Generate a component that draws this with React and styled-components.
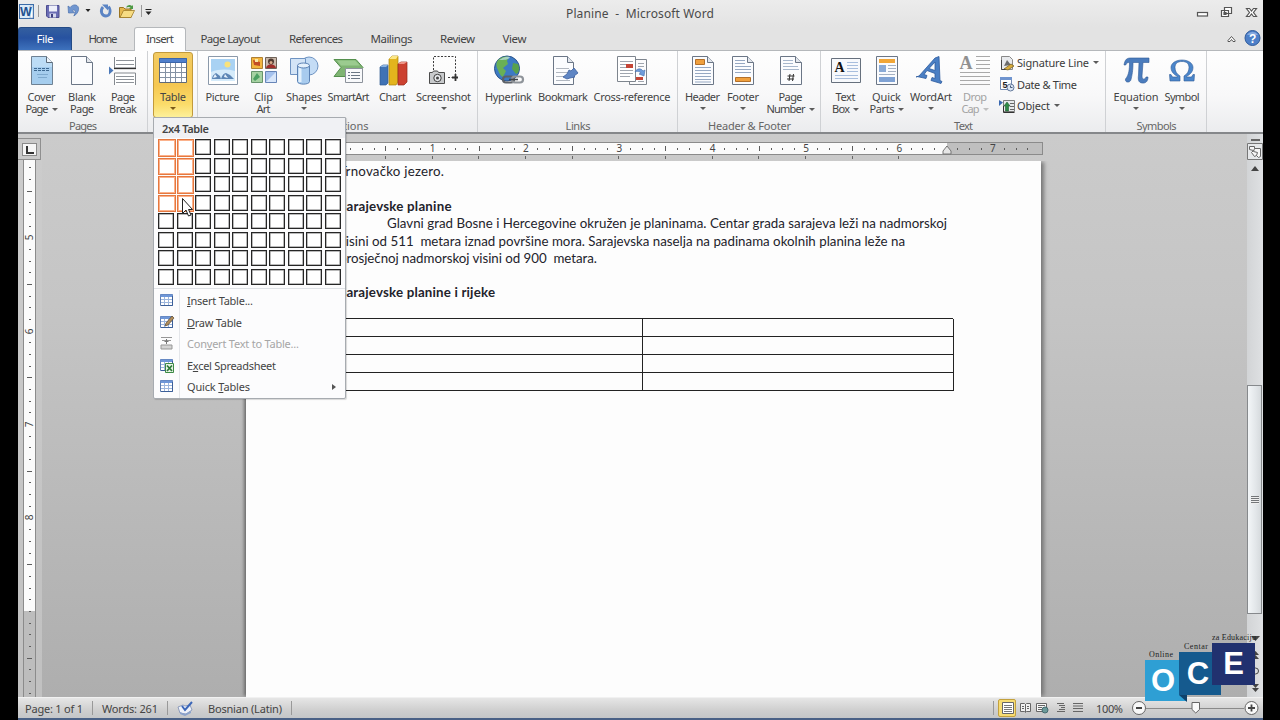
import React, { useLayoutEffect, useRef, useState } from 'react'
import styled, { createGlobalStyle, css } from 'styled-components'

const GlobalStyle = createGlobalStyle`
  * { box-sizing: border-box; }
  body {
    margin: 0;
    background: #000;
    overflow: hidden;
    font-family: "Noto Sans", "Open Sans", sans-serif;
    font-size: 11px;
    color: #3b3b3b;
  }
  svg { display: block; flex: none; }
`

const Screen = styled.div`
  width: 1280px;
  height: 720px;
  padding: 0 17px 0 18px;
  background: #000;
`
const Window = styled.div`
  position: relative;
  width: 1245px;
  height: 720px;
  display: flex;
  flex-direction: column;
  background: #e4e4e4;
`

/* ---------- text ---------- */
const FitBox = styled.span`
  display: inline-block;
  white-space: pre;
  text-align: left;
  flex: none;
`
// tracks the text so that it spans exactly `w` pixels
const Fit = ({ w, children }) => {
  const ref = useRef(null)
  const [spacing, setSpacing] = useState(0)
  useLayoutEffect(() => {
    const chars = ref.current.textContent.length
    const natural = ref.current.getBoundingClientRect().width
    setSpacing((w - natural) / Math.max(1, chars - 1))
  }, [w])
  return (
    <FitBox style={{ width: w }}>
      <span ref={ref} style={{ letterSpacing: spacing }}>{children}</span>
    </FitBox>
  )
}

const Caret = styled.i`
  display: inline-block;
  flex: none;
  border: 3px solid transparent;
  border-top-color: ${p => p.color || '#5b5b5b'};
  border-bottom: 0;
  margin: ${p => p.m || '0'};
`

/* ---------- title bar ---------- */
const TitleBar = styled.div`
  height: 27px;
  display: flex;
  align-items: flex-start;
  background: linear-gradient(#ececec, #e3e3e3);
`
const QuickAccess = styled.div`
  width: 548px;
  padding: 3px 0 0 1px;
`
const Title = styled.div`
  font-size: 12px;
  line-height: 28px;
  color: #4a4a4a;
`
const WindowButtons = styled.div`
  margin-left: auto;
  padding: 6px 5px 0 0;
`

const QuickIcons = () => (
  <svg width="138" height="18" viewBox="19 3 138 18">
    <rect x="19.500" y="4.500" width="14" height="14" fill="#dcebf8" stroke="#3b6ca8" />
    <path d="M30 6h3v12h-3z" fill="#fff" stroke="#7d9cc4" strokeWidth=".6" />
    <text x="20" y="16" fontFamily="Liberation Sans" fontWeight="bold" fontSize="12.500" fill="#1f5290">W</text>
    <path d="M38.500 5v12M141.500 5v12" stroke="#9a9a9a" />
    <path d="M46.500 5.500h12.500v12H48l-1.500-1.500z" fill="#6a6cb4" stroke="#4d4e90" />
    <path d="M49 5.500h8v6h-8z" fill="#eef0fa" />
    <path d="M49.500 13.500h6.500v4h-6.500z" fill="#d6d9ee" />
    <path d="M51 14h2v3.500h-2z" fill="#3d3e80" />
    <path d="M68 6l.5 7 6-.2-2.200-2.200c3-1.600 4 .8 1.500 5.400 5.500-3 6.500-10 1.800-11-2-.4-4 .6-5.500 2.500z" fill="#7096d0" stroke="#4a70ae" strokeWidth=".7" />
    <path d="M85.500 9h5l-2.500 3z" fill="#222" />
    <path d="M103 7c-3.500 4-1 9 3 9s5.500-5.500 2.500-9.500" fill="none" stroke="#5b84c4" strokeWidth="2.800" />
    <path d="M102 4.500h6v6z" fill="#5b84c4" />
    <path d="M119.500 17.500v-10h4l1.500 1.500h6v8.500z" fill="#e6b84e" stroke="#9a7422" />
    <path d="M120 17.500l3.500-7h11l-3.500 7z" fill="#f7dc83" stroke="#a07c2a" strokeWidth=".8" />
    <path d="M126 7.500c2-3 4-3 6-1.500l1-1v4h-4l1.500-1.500c-1-1-3-.5-4.500 0z" fill="#4e9a46" />
    <path d="M145.500 9.500h6" stroke="#222" />
    <path d="M145.500 11.500h6l-3 3.500z" fill="#222" />
  </svg>
)

/* ---------- tabs ---------- */
const Tabs = styled.div`
  height: 24px;
  display: flex;
  background: #e3e3e3;
  border-bottom: 1px solid #b5b8bb;
`
const Tab = styled.div`
  width: ${p => p.width}px;
  height: 23px;
  display: flex;
  justify-content: center;
  line-height: 23px;
  color: #444;
  font-size: 11.500px;
  ${p => p.file && css`
    color: #fff;
    line-height: 22px;
    background: linear-gradient(#345f9f, #2752a0 45%, #3e72bd);
    border: 1px solid #244b86;
    border-bottom: 0;
    border-radius: 3px 3px 0 0;
  `}
  ${p => p.active && css`
    height: 24px;
    line-height: 22px;
    background: #fdfdfd;
    border: 1px solid #b5b8bb;
    border-bottom: 0;
    border-radius: 3px 3px 0 0;
  `}
`
const TabTools = styled.div`
  margin-left: auto;
  padding: 2px 2px 0 0;
`

/* ---------- ribbon ---------- */
const Ribbon = styled.div`
  height: 83px;
  flex: none;
  display: flex;
  background: linear-gradient(#fefefe, #f8f8f9 55%, #ebecee);
  border-bottom: 2px solid #85878a;
`
const Group = styled.div`
  width: ${p => p.width}px;
  padding: 1px 0 0 ${p => p.pad}px;
  display: flex;
  flex-direction: column;
  border-right: 1px solid #cfd1d4;
`
const GroupRow = styled.div`
  display: flex;
  height: 66px;
`
const GroupLabel = styled.div`
  display: flex;
  justify-content: center;
  line-height: 15px;
  color: #666;
  margin-left: -${p => p.pad}px;
  padding-left: 1px;
`
const BigButton = styled.div`
  width: ${p => p.width}px;
  height: 66px;
  flex: none;
  display: flex;
  flex-direction: column;
  align-items: center;
  padding-top: 2px;
  color: ${p => (p.disabled ? '#a3a3a3' : '#444')};
  ${p => p.active && css`
    padding-top: 1px;
    border: 1px solid #c29a3c;
    border-radius: 3px;
    background: linear-gradient(#f3cb62, #f5c751 50%, #fbdc6a 80%, #fdf09a);
  `}
`
const LabelLine = styled.div`
  height: 12px;
  line-height: 12px;
  display: flex;
  align-items: center;
  margin-top: ${p => (p.first ? 5 : 0)}px;
`
const SmallColumn = styled.div`
  display: flex;
  flex-direction: column;
  padding: 0 0 0 4px;
`
const SmallButton = styled.div`
  height: 21.500px;
  display: flex;
  align-items: center;
  gap: 2px;
`

const Doc = ({ children, x = 5.5, w = 21 }) => (
  <>
    <path d={`M${x} 2.500h${w - 6}l6 6v22h-${w}z`} fill="#fbfcfe" stroke="#6b7686" />
    <path d={`M${x + w - 6} 2.500v6h6`} fill="#e2e6ec" stroke="#6b7686" />
    {children}
  </>
)

const icons = {
  cover: (
    <>
      <path d="M5.500 2.500h15l6 6v22h-21z" fill="#a5cdee" stroke="#6e8193" />
      <path d="M6 3h14v6h6v4H6z" fill="#bcdcf5" />
      <path d="M20.500 2.500v6h6" fill="#eef5fb" stroke="#5c6a78" />
      <path d="M8 14.500h16M8 16.500h15" stroke="#3d6890" strokeDasharray="3 1" />
      <path d="M11 20.500h11M12 23.500h9" stroke="#7faacf" />
    </>
  ),
  blank: <Doc />,
  pageBreak: (
    <>
      <path d="M7.500 3v11h21V3M7.500 31V19h21v12" fill="#fff" stroke="#84898f" />
      <path d="M9 6.500h18M9 10.500h18M9 22.500h18M9 25.500h18M9 28.500h18" stroke="#8e9399" />
      <path d="M7 14.500h22" stroke="#333" strokeWidth="1.300" />
      <path d="M2 12.500l4.500 4-4.500 4z" fill="#4b78b8" />
    </>
  ),
  table: (
    <>
      <path d="M2.500 4.500h27v24h-27z" fill="#fff" stroke="#5f6a78" />
      <path d="M2.500 4.500h27v4h-27z" fill="#4f7fcb" stroke="#3c66aa" />
      <path d="M3 13.500h26M3 18.500h26M3 23.500h26M8.500 9v19M13.500 9v19M18.500 9v19M24.500 9v19" stroke="#8492a4" />
    </>
  ),
  picture: (
    <>
      <path d="M1.500 2.500h29v28h-29z" fill="#fff" stroke="#8b99aa" />
      <path d="M4 5h24v22H4z" fill="#a9d2f3" />
      <path d="M4 18c8-3 16-3 24-1v10H4z" fill="#d5ebfa" />
      <circle cx="20.500" cy="10.500" r="3" fill="#f9e27b" />
      <path d="M5 25c0-3 2-5 4-6l4 3 1 3zM14 25c1-4 3-6 5-6l4 2 4 4z" fill="#5d86b5" />
      <path d="M8 20l2 3-4 1zM18 20l3 4-4-1z" fill="#e8f2fb" />
    </>
  ),
  clipArt: (
    <>
      <path d="M3.500 3.500h11v11h-11z" fill="#f3b53f" stroke="#ae8033" />
      <path d="M5 6l7 2v4l-6-1z" fill="#c24c26" />
      <path d="M7 5h3v3H7z" fill="#fae7a6" />
      <path d="M17.500 3.500h11v11h-11z" fill="#c9b8ab" stroke="#6f6258" />
      <path d="M18 14c1-5 9-5 10 0z" fill="#a02e2a" />
      <circle cx="23" cy="7.500" r="3" fill="#4f3a30" />
      <circle cx="23" cy="8.500" r="1.500" fill="#d9ab8c" />
      <path d="M3.500 17.500h11v11h-11z" fill="#a6d2a2" stroke="#66936b" />
      <path d="M5 25l4-6 3 4-5 4z" fill="#4ca062" />
      <path d="M17.500 17.500h11v11h-11z" fill="#a5c2ee" stroke="#6785b7" />
      <path d="M28 18v10H18z" fill="#d8e6fa" />
    </>
  ),
  shapes: (
    <>
      <circle cx="21" cy="12" r="9" fill="#c4dcf5" stroke="#6e93c2" />
      <path d="M2.500 4.500h15v16h-15z" fill="#d3e4f6" stroke="#6e93c2" />
      <path d="M9.500 11.500v16c0 3.500 12 3.500 12 0v-16z" fill="#a8cbee" stroke="#5b82b4" />
      <path d="M12 13v15" stroke="#e3f0fc" strokeWidth="3" />
      <ellipse cx="15.500" cy="11.500" rx="6" ry="2.500" fill="#e4f0fb" stroke="#5b82b4" />
    </>
  ),
  smartArt: (
    <>
      <path d="M1 5.500h22l7 8-7 9H1l7-9z" fill="#7fb473" stroke="#55904e" />
      <path d="M4 6.500h18l5 5H8z" fill="#9bcb8f" />
      <path d="M12.500 14.500h17v14h-17z" fill="#f8f9fb" stroke="#8c929b" />
      <path d="M15 18.500h2M15 21.500h2M15 24.500h2M18 18.500h9M18 21.500h9M18 24.500h9" stroke="#6b7785" />
    </>
  ),
  chart: (
    <>
      <path d="M3 13l3-2h5v18l-2 2H3z" fill="#3f72b5" stroke="#2f598f" strokeWidth=".7" />
      <path d="M3 13l3-2h5l-2 2z" fill="#87b1e2" />
      <path d="M12 5l3-3h6v26l-2 3h-7z" fill="#e3b41d" stroke="#a8830f" strokeWidth=".7" />
      <path d="M12 5l3-3h6l-2 3z" fill="#fbe685" />
      <path d="M21 10l3-2h6v20l-3 3h-6z" fill="#cc4130" stroke="#93281a" strokeWidth=".7" />
      <path d="M21 10l3-2h6l-3 2z" fill="#ee9486" />
    </>
  ),
  screenshot: (
    <>
      <path d="M5.500 16V2.500h22V22M20 23.500h5" fill="none" stroke="#3c3c3c" strokeDasharray="2 1.500" />
      <path d="M27.500 20v7M24 23.500h6" stroke="#333" strokeWidth="1.800" />
      <path d="M1.500 18.500h3l1-1.500h4l1 1.500h6v11h-15z" fill="#c8cacc" stroke="#4b4b4b" />
      <circle cx="9.500" cy="24" r="3.700" fill="#e9ebee" stroke="#3c3c3c" />
      <circle cx="9.500" cy="24" r="1.500" fill="#444" />
    </>
  ),
  hyperlink: (
    <>
      <circle cx="14" cy="14.500" r="12.500" fill="#3d7ac4" stroke="#2a5288" />
      <path d="M5 6c4-4 9-4 11-3l-2 4 1 3-5 4 3 3-3 6c-4-2-4-6-6-9-1-3-1-5 1-8z" fill="#69b055" />
      <path d="M20 9l5 1c2 5 1 9-2 10l-4-5z" fill="#58a14d" />
      <path d="M6 6c4-3 8-4 11-3-1 3-7 3-11 3z" fill="#c5e3ef" opacity=".7" />
      <rect x="10" y="22.500" width="11" height="6" rx="3" fill="none" stroke="#5d6167" strokeWidth="2.200" />
      <rect x="19" y="22.500" width="11" height="6" rx="3" fill="none" stroke="#8f949a" strokeWidth="2.200" />
      <path d="M16 25.500h9" stroke="#42464b" strokeWidth="1.500" />
    </>
  ),
  bookmark: (
    <Doc x={6.5} w={20}>
      <path d="M9 14.500h13M9 18.500h12M9 22.500h10M9 26.500h14" stroke="#b1b7c0" />
      <path d="M16 23l4-3 2-4 2 1 3-3 4 5-4 3 1 1-5 1-3 1z" fill="#5f86c4" stroke="#3c609e" strokeWidth=".8" />
    </Doc>
  ),
  crossRef: (
    <>
      <path d="M13.500 5.500h17v25h-17z" fill="#fcfcfd" stroke="#7e858e" />
      <path d="M1.500 2.500h18v25h-18z" fill="#fff" stroke="#7e858e" />
      <path d="M4 7.500h13M4 10.500h6M4 13.500h6M4 16.500h13M4 19.500h13M4 22.500h10M22 9.500h6M22 12.500h6M22 27.500h6" stroke="#a0a6af" />
      <path d="M10 10h7v4h-7zM20 23h7v3h-7z" fill="#c44536" />
      <path d="M19 18c2-4 6-4 8-1l2-1-1 6-5-2 2-1c-2-2-4-2-6-1z" fill="#6e9bda" stroke="#426fae" strokeWidth=".6" />
    </>
  ),
  header: (
    <Doc>
      <path d="M8.500 5.500h9v5h-9z" fill="#ef9f3d" stroke="#b3702a" />
      <path d="M8 13.500h16M8 16.500h16M8 19.500h16M8 22.500h16M8 25.500h16M8 28h16" stroke="#96a8c2" />
    </Doc>
  ),
  footer: (
    <Doc>
      <path d="M8 6.500h10M8 9.500h10M8 12.500h16M8 15.500h16M8 18.500h16" stroke="#96a8c2" />
      <path d="M8.500 23.500h15v4h-15z" fill="#ef9f3d" stroke="#b3702a" />
    </Doc>
  ),
  pageNumber: (
    <Doc>
      <path d="M8 6.500h10M8 9.500h10M8 12.500h15M8 15.500h16" stroke="#a8b8cd" />
      <path d="M15 20l-1 7M18.500 20l-1 7M12.500 22h7M12 25h7" stroke="#333" />
    </Doc>
  ),
  textBox: (
    <>
      <path d="M1.500 4.500h29v24h-29z" fill="#f7f9fc" stroke="#66707d" />
      <text x="4.500" y="18" fontFamily="Liberation Serif" fontWeight="bold" fontSize="14" fill="#111">A</text>
      <path d="M17 8.500h11M17 11.500h11M17 14.500h11M17 17.500h11M5 21.500h23M5 24.500h23" stroke="#a8bedd" />
    </>
  ),
  quickParts: (
    <>
      <path d="M5.500 2.500h21v28h-21z" fill="#fafbfd" stroke="#6b7686" />
      <path d="M8 5h16v4H8z" fill="#f1a637" />
      <path d="M8 11h7v7H8z" fill="#8aaad6" />
      <path d="M17 11.500h8M17 14.500h8M17 17.500h8M8 20.500h16" stroke="#a5b1c3" />
      <path d="M8 23h16v5H8z" fill="#7fa2d4" />
    </>
  ),
  wordArt: (
    <path
      fillRule="evenodd"
      d="M1 23l3-1L20 4l4-1.500 1 24 2 1-1 2-10-3 1-3 3 1v-5l-8-3-3 4 3 1-1 3-9-2zM14 14.500l6 2V8z"
      fill="#4a7fc4"
      stroke="#2f5c9e"
      strokeWidth=".8"
    />
  ),
  dropCap: (
    <>
      <text x=".5" y="15" fontFamily="Liberation Serif" fontWeight="bold" fontSize="18" fill="#909090">A</text>
      <path d="M17 2.500h14M17 6.500h14M17 10.500h14M17 14.500h14M1 18.500h30M1 22.500h30M1 26.500h30M1 30.500h30" stroke="#a9a9a9" />
    </>
  ),
  equation: (
    <path
      d="M4 11c1-6 3-7 7-7h18v4.500h-6L22 22c0 4 3 4 4 1h2c0 5-3 6.500-6 6-4-.5-4-4-3.500-8L19 8.500h-6c0 8-1 13-2 17-1 4-6.500 3-5.500-.5C9 21 9.500 15 9.500 8.500c-2 0-3 .5-3.800 2.500z"
      fill="#4b7cbd"
      stroke="#2f5a97"
      strokeWidth=".6"
    />
  ),
  symbol: (
    <path
      d="M3.500 20.500H5l1.500 2.500h5v-.5C7 20 5 17 5 13.500 5 9 10 6 16 6s11 3 11 7.500c0 3.500-2 6.500-6.500 9v.5h5l1.500-2.500h1.500L28 27H18v-5c3.500-2 5-5 5-8.500 0-4-2.500-6-7-6s-7 2-7 6c0 3.500 1.500 6.500 5 8.500v5H4z"
      fill="#4b86cb"
      stroke="#2f5a97"
      strokeWidth=".6"
    />
  ),
}

const Icon = ({ name }) => (
  <svg width="32" height="32" viewBox="0 0 32 32">{icons[name]}</svg>
)

// lines: [text, width], the caret goes after the last line or below a single one
const groups = [
  {
    label: ['Pages', 28], width: 130, pad: 3,
    buttons: [
      { icon: 'cover', width: 41, lines: [['Cover', 28], ['Page', 23]], caret: true },
      { icon: 'blank', width: 40, lines: [['Blank', 28], ['Page', 24]] },
      { icon: 'pageBreak', width: 42, lines: [['Page', 24], ['Break', 28]] },
    ],
  },
  {
    width: 50, pad: 5,
    buttons: [{ icon: 'table', width: 40, lines: [['Table', 26]], caret: true, active: true }],
  },
  {
    label: ['Illustrations', 61], width: 280, pad: 4,
    buttons: [
      { icon: 'picture', width: 41, lines: [['Picture', 34]] },
      { icon: 'clipArt', width: 41, lines: [['Clip', 19], ['Art', 14]] },
      { icon: 'shapes', width: 40, lines: [['Shapes', 36]], caret: true },
      { icon: 'smartArt', width: 49, lines: [['SmartArt', 42]] },
      { icon: 'chart', width: 39, lines: [['Chart', 27]] },
      { icon: 'screenshot', width: 63, lines: [['Screenshot', 55]], caret: true },
    ],
  },
  {
    label: ['Links', 25], width: 200, pad: 4,
    buttons: [
      { icon: 'hyperlink', width: 53, lines: [['Hyperlink', 47]] },
      { icon: 'bookmark', width: 56, lines: [['Bookmark', 50]] },
      { icon: 'crossRef', width: 82, lines: [['Cross-reference', 77]] },
    ],
  },
  {
    label: ['Header & Footer', 83], width: 143, pad: 4,
    buttons: [
      { icon: 'header', width: 41, lines: [['Header', 35]], caret: true },
      { icon: 'footer', width: 40, lines: [['Footer', 32]], caret: true },
      { icon: 'pageNumber', width: 55, lines: [['Page', 24], ['Number', 39]], caret: true },
    ],
  },
  {
    label: ['Text', 19], width: 285, pad: 4,
    buttons: [
      { icon: 'textBox', width: 41, lines: [['Text', 20], ['Box', 18]], caret: true },
      { icon: 'quickParts', width: 41, lines: [['Quick', 29], ['Parts', 25]], caret: true },
      { icon: 'wordArt', width: 48, lines: [['WordArt', 42]], caret: true },
      { icon: 'dropCap', width: 40, lines: [['Drop', 24], ['Cap', 18]], caret: true, disabled: true },
    ],
    small: true,
  },
  {
    label: ['Symbols', 40], width: 101, pad: 6,
    buttons: [
      { icon: 'equation', width: 48, lines: [['Equation', 45]], caret: true },
      { icon: 'symbol', width: 44, lines: [['Symbol', 35]], caret: true },
    ],
  },
]

const RibbonButton = ({ icon, width, lines, caret, active, disabled }) => {
  const color = disabled ? '#c0c0c0' : active ? '#7a5a18' : undefined
  return (
    <BigButton width={width} active={active} disabled={disabled}>
      <Icon name={icon} />
      {lines.map(([text, w], i) => (
        <LabelLine key={text} first={i === 0}>
          <Fit w={w}>{text}</Fit>
          {caret && i === 1 && <Caret color={color} m="0 0 0 3px" />}
        </LabelLine>
      ))}
      {caret && lines.length === 1 && <Caret color={color} m="4px 0 0" />}
    </BigButton>
  )
}

const SignatureIcon = () => (
  <svg width="16" height="16" viewBox="0 0 16 16">
    <path d="M2.500 1.500h8l3 3v10h-11z" fill="#e8eaed" stroke="#888" />
    <path d="M5 11l3-6 4 5z" fill="#6b6b6b" />
    <path d="M5 14l7-5 3 2-6 4z" fill="#d9ac3c" stroke="#6f5a1d" strokeWidth=".7" />
    <path d="M2.500 5v9.500h4" fill="none" stroke="#444" />
  </svg>
)
const DateIcon = () => (
  <svg width="16" height="16" viewBox="0 0 16 16">
    <path d="M1.500 1.500h11v12h-11z" fill="#fff" stroke="#7289b0" />
    <path d="M1 1h12v3H1z" fill="#6f94cf" />
    <text x="3.500" y="12" fontFamily="Liberation Sans" fontWeight="bold" fontSize="9" fill="#222">5</text>
    <circle cx="11.500" cy="11.500" r="3.500" fill="#dde7f4" stroke="#64799b" />
    <path d="M11.500 9.500v2h2" fill="none" stroke="#465a7a" />
  </svg>
)
const ObjectIcon = () => (
  <svg width="16" height="16" viewBox="0 0 16 16">
    <path d="M4.500 2.500h11v11h-11z" fill="#e7e9eb" stroke="#7d7d7d" />
    <path d="M11 5.500h4M11 8.500h4M11 11.500h4" stroke="#666" />
    <path d="M5 8l3-4 3 4H9.500v5h-3V8z" fill="#2f8a46" stroke="#235e33" strokeWidth=".6" />
    <path d="M0 2l4 2.500L0 8z" fill="#3a68b0" />
    <path d="M4.500 8v6.500h11" fill="none" stroke="#333" />
  </svg>
)

/* ---------- workspace ---------- */
const Workspace = styled.div`
  height: 563px;
  flex: none;
  display: flex;
  background: linear-gradient(#cbcbcb, #c5c5c5 30%, #aeaeae);
`
const LeftRail = styled.div`
  width: 24px;
  padding-top: 4px;
  background: rgba(205, 205, 205, .6);
`
const TabStop = styled.div`
  width: 23px;
  height: 22px;
  padding: 4px;
  background: #c9c9c9;
  border: 1px solid #8f8f8f;
  border-left: 0;
`
const TabStopFace = styled.div`
  width: 15px;
  height: 13px;
  display: flex;
  align-items: center;
  justify-content: center;
  background: #f6f6f6;
  border: 1px solid #8a8a8a;
  &::after {
    content: '';
    width: 6px;
    height: 6px;
    border: solid #333;
    border-width: 0 0 2px 2px;
  }
`
const VerticalRuler = styled.div`
  width: 13px;
  height: 537px;
  margin-left: 5px;
  padding-top: 2px;
  overflow: hidden;
  display: flex;
  flex-direction: column;
  border: solid #8b8b8b;
  border-width: 0 1px;
  background: linear-gradient(#fbfbfb 451px, #bdbdbd 451px);
`
const Mark = styled.div`
  flex: none;
  display: flex;
  align-items: center;
  justify-content: center;
  font-size: 10px;
  line-height: 11px;
  color: #444;
  ${p => (p.vertical ? 'height: 11.680px; width: 11px;' : 'width: 11.675px; height: 11px;')}
`
const Tick = styled.i`
  width: ${p => p.w}px;
  height: ${p => p.h}px;
  background: #5c5c5c;
`
const Turned = styled.span`
  transform: rotate(-90deg);
`
const Canvas = styled.div`
  flex: 1;
  min-width: 0;
  padding: 8px 0 0 204px;
  display: flex;
  flex-direction: column;
`
const Ruler = styled.div`
  width: 797px;
  height: 13px;
  flex: none;
  display: flex;
  padding-left: 98px;
  border: 1px solid #8b8b8b;
  background: linear-gradient(90deg, #bdbdbd 93px, #fbfbfb 93px, #fbfbfb 700px, #bfbfbf 700px);
`
const IndentMark = styled.svg`
  position: absolute;
  left: 924px;
  top: 142px;
`
const TabTicks = styled.div`
  height: 6px;
  flex: none;
  display: flex;
  padding: 1px 0 0 116px;
`
const TabTick = styled.i`
  width: 46.700px;
  height: 3px;
  display: flex;
  justify-content: center;
  &::after { content: ''; width: 1px; background: #666; }
`
const Page = styled.div`
  width: 795px;
  flex: 1;
  background: #fdfdfd;
  padding: 0 0 0 93px;
  font-family: Lato, "Open Sans", sans-serif;
  font-size: 13.300px;
  color: #23232b;
  box-shadow: 4px 0 4px -1px #777, -3px 0 3px -1px #6e6e6e;
  clip-path: inset(0 -12px 0 -12px);
`
const Line = styled.div`
  height: ${p => p.h || 17.5}px;
  line-height: ${p => p.h || 17.5}px;
  display: flex;
  padding-left: ${p => p.indent || 0}px;
  font-weight: ${p => (p.bold ? 700 : 400)};
`
const DocTable = styled.div`
  width: 622px;
  margin: 17px 0 0 -8px;
  display: grid;
  grid-template-columns: 311px 311px;
  grid-auto-rows: 18px;
  border: solid #222;
  border-width: 1px 0 0 1px;
`
const DocCell = styled.div`
  border: solid #222;
  border-width: 0 1px 1px 0;
`

const ScrollBar = styled.div`
  width: 16px;
  padding-top: 4px;
  display: flex;
  flex-direction: column;
  align-items: center;
  background: linear-gradient(90deg, #d2d4d6, #dfe1e3);
`
const ScrollTrack = styled.div`
  width: 16px;
  height: 438px;
  padding-top: 209px;
`
const ScrollThumb = styled.div`
  width: 15px;
  height: 229px;
  display: flex;
  align-items: center;
  justify-content: center;
  border: 1px solid #86898c;
  background: linear-gradient(90deg, #f3f6f8, #e2e6e9 60%, #d6dadd);
  &::after {
    content: '';
    width: 8px;
    height: 8px;
    background: repeating-linear-gradient(#737679 0 1px, #eee 1px 2px);
  }
`

/* ---------- status bar ---------- */
const StatusBar = styled.div`
  height: 23px;
  display: flex;
  align-items: center;
  border-top: 1px solid #f1f1f1;
  border-bottom: 2px solid #4a6186;
  padding: 0 4px 0 7px;
  background: linear-gradient(#e6e6e6, #cfcfcf 60%, #c4c6c8);
  color: #444;
`
const StatusSep = styled.i`
  width: 1px;
  height: 14px;
  background: #999;
  margin: 0 ${p => p.r}px 0 ${p => p.l}px;
`
const Spring = styled.div`
  flex: 1;
`
const Proofing = styled.div`
  margin-right: 15px;
`
const ActiveView = styled.div`
  width: 18px;
  height: 18px;
  padding: 2px;
  border: 1px solid #c3a13e;
  border-radius: 2px;
  background: #f8dd74;
  margin-right: 3px;
`
const ZoomLevel = styled.div`
  margin: 0 8px 0 11px;
`

/* ---------- table menu ---------- */
const Menu = styled.div`
  position: absolute;
  left: 135px;
  top: 117px;
  width: 193px;
  height: 282px;
  background: #fcfcfd;
  border: 1px solid #a7abb0;
  border-radius: 0 0 2px 2px;
  box-shadow: 1px 1px 1px rgba(0, 0, 0, .15);
`
const MenuTitle = styled.div`
  height: 20px;
  line-height: 21px;
  padding-left: 8px;
  background: #f0f1f4;
  font-weight: 600;
  color: #444;
`
const SizeGrid = styled.div`
  display: grid;
  grid-template-columns: repeat(10, 18.530px);
  grid-auto-rows: 18.530px;
  height: 151px;
  padding: 1px 0 0 4px;
  margin-bottom: 1px;
  border-bottom: 1px solid #dfe2e6;
`
const SizeCell = styled.div`
  width: 16px;
  height: 16px;
  background: #fff;
  border: 1px solid #262626;
  box-shadow: inset 0 0 0 .5px #777;
  ${p => p.on && css`
    width: 17.500px;
    height: 17.500px;
    border-color: #e5783f;
    box-shadow: inset 0 0 0 1px #fbb28c;
  `}
`
const MenuItem = styled.div`
  height: 21.500px;
  display: flex;
  align-items: center;
  color: ${p => (p.disabled ? '#a6a6a6' : '#444')};
`
const MenuIcon = styled.div`
  width: 26px;
  height: 100%;
  padding-left: 4px;
  margin-right: 7px;
  display: flex;
  align-items: center;
  border-right: 1px solid #e4e6ea;
`
const SubArrow = styled.i`
  margin: 0 9px 0 auto;
  border: 3px solid transparent;
  border-left: 4px solid #555;
  border-right: 0;
`
const Cursor = styled.svg`
  position: absolute;
  left: 163px;
  top: 197px;
`

const Grid16 = () => (
  <>
    <path d="M2.500 2.500h12v11h-12z" fill="#fff" stroke="#5e7db0" />
    <path d="M2.500 2.500h12v2.500h-12z" fill="#6f97d8" />
    <path d="M3 7.500h11M3 10.500h11M6.500 5v8M10.500 5v8" stroke="#9db6dd" />
    <path d="M14.500 4v9.500H3" fill="none" stroke="#3c5f98" />
  </>
)
const menuItems = [
  { text: <><u>I</u>nsert Table...</>, w: 66, icon: <Grid16 /> },
  {
    text: <><u>D</u>raw Table</>, w: 55,
    icon: <><Grid16 /><path d="M7 12l1-3 6-7 2 2-6 7z" fill="#b08d5b" stroke="#5d4a30" strokeWidth=".7" /></>,
  },
  {
    text: <>Con<u>v</u>ert Text to Table...</>, w: 112, disabled: true,
    icon: (
      <>
        <path d="M3 2.500h11M4 5.500h9M3 10h11v4H3z" fill="#d4d4d4" stroke="#979797" />
        <path d="M8.500 4v5M6.500 6.500h4" stroke="#777" />
      </>
    ),
  },
  {
    text: <>E<u>x</u>cel Spreadsheet</>, w: 89,
    icon: (
      <>
        <Grid16 />
        <path d="M7.500 6.500h8v9h-8z" fill="#e8f4e6" stroke="#3d8a45" />
        <path d="M9 8.500l5 5.500M14 8.500L9 14" stroke="#2c7a37" strokeWidth="1.700" />
      </>
    ),
  },
  { text: <>Quick <u>T</u>ables</>, w: 63, icon: <Grid16 />, sub: true },
]

/* ---------- channel logo ---------- */
const Logo = styled.div`
  position: absolute;
  left: 1127px;
  top: 633px;
  display: flex;
  align-items: flex-start;
`
const LogoPart = styled.div`
  width: ${p => p.w}px;
  padding-top: ${p => p.drop}px;
  color: #222;
  white-space: nowrap;
`
const LogoName = styled.div`
  height: 10px;
  padding-left: ${p => p.x}px;
  font: 8px/10px "Liberation Serif", serif;
`
const LogoTile = styled.div`
  position: relative;
  width: ${p => p.w || 42}px;
  height: ${p => p.h || 42}px;
  padding-right: ${p => p.shift || 0}px;
  display: flex;
  align-items: center;
  justify-content: center;
  background: ${p => p.bg};
  color: #fff;
  font: bold 31px/40px "Liberation Sans", sans-serif;
  ${p => p.fold && css`
    &::after {
      content: '';
      position: absolute;
      left: 0;
      top: 100%;
      border: solid transparent;
      border-width: 0 0 7px 8px;
      border-right: 0;
      border-top: 7px solid ${p.fold};
      border-bottom: 0;
    }
  `}
`

const cells = Array.from({ length: 80 }, (_, i) => i)
const horizontal = Array.from({ length: 59 }, (_, i) => i + 1)
const vertical = Array.from({ length: 46 }, (_, i) => i)

const App = () => (
  <Screen>
    <GlobalStyle />
    <Window>
      <TitleBar>
        <QuickAccess><QuickIcons /></QuickAccess>
        <Title><Fit w={148}>{'Planine  -  Microsoft Word'}</Fit></Title>
        <WindowButtons>
          <svg width="62" height="14" viewBox="1196 6 62 14" fill="#fff" stroke="#555" strokeWidth="1.200">
            <rect x="1197.500" y="12.500" width="10" height="3.500" />
            <path d="M1224.500 7.500h7v6h-7zM1221.500 10.500h7v6h-7zM1224 12.500h2v2h-2z" />
            <path d="M1246.500 8.500h3l2 2.500 2-2.500h3l-3 4 3 4h-3l-2-2.500-2 2.500h-3l3-4z" />
          </svg>
        </WindowButtons>
      </TitleBar>

      <Tabs>
        <Tab file width={54}><Fit w={17}>File</Fit></Tab>
        <Tab width={62}><Fit w={29}>Home</Fit></Tab>
        <Tab active width={52}><Fit w={28}>Insert</Fit></Tab>
        <Tab width={89}><Fit w={60}>Page Layout</Fit></Tab>
        <Tab width={82}><Fit w={54}>References</Fit></Tab>
        <Tab width={69}><Fit w={42}>Mailings</Fit></Tab>
        <Tab width={63}><Fit w={35}>Review</Fit></Tab>
        <Tab width={51}><Fit w={24}>View</Fit></Tab>
        <TabTools>
          <svg width="36" height="18" viewBox="1225 29 36 18">
            <path d="M1228 40.500l3.500-4 3.500 4v1h-2l-1.500-2-1.500 2h-2z" fill="#fff" stroke="#555" />
            <circle cx="1252.500" cy="38" r="7.500" fill="#4d7fc8" stroke="#2f5b9c" />
            <path d="M1247 35c2-4 9-4 11 0z" fill="#86aae0" />
            <text x="1249" y="42.500" fontFamily="Liberation Sans" fontWeight="bold" fontSize="12" fill="#fff">?</text>
          </svg>
        </TabTools>
      </Tabs>

      <Ribbon>
        {groups.map(g => (
          <Group key={g.buttons[0].icon} width={g.width} pad={g.pad}>
            <GroupRow>
              {g.buttons.map(b => <RibbonButton key={b.icon} {...b} />)}
              {g.small && (
                <SmallColumn>
                  <SmallButton><SignatureIcon /><Fit w={72}>Signature Line</Fit><Caret m="0 0 0 2px" /></SmallButton>
                  <SmallButton><DateIcon /><Fit w={60}>Date &amp; Time</Fit></SmallButton>
                  <SmallButton><ObjectIcon /><Fit w={33}>Object</Fit><Caret m="0 0 0 2px" /></SmallButton>
                </SmallColumn>
              )}
            </GroupRow>
            {g.label && <GroupLabel pad={g.pad}><Fit w={g.label[1]}>{g.label[0]}</Fit></GroupLabel>}
          </Group>
        ))}
      </Ribbon>

      <Workspace>
        <LeftRail>
          <TabStop><TabStopFace /></TabStop>
          <VerticalRuler>
            {vertical.map(i => (
              <Mark key={i} vertical>
                {i % 8 === 6 && i < 38
                  ? <Turned>{5 + (i - 6) / 8}</Turned>
                  : <Tick w={i % 8 === 2 ? 5 : 2} h={1} />}
              </Mark>
            ))}
          </VerticalRuler>
        </LeftRail>

        <Canvas>
          <Ruler>
            {horizontal.map(i => (
              <Mark key={i}>
                {i % 8 === 0 ? i / 8 : <Tick w={1} h={i % 8 === 4 ? 5 : 2} />}
              </Mark>
            ))}
          </Ruler>
          <TabTicks>
            {Array.from({ length: 12 }, (_, i) => <TabTick key={i} />)}
          </TabTicks>
          <Page>
            <Line h={20}><Fit w={105}>Trnovačko jezero.</Fit></Line>
            <Line h={16} />
            <Line h={18} bold><Fit w={112.5}>Sarajevske planine</Fit></Line>
            <Line h={17.5} indent={48}>
              <Fit w={560}>Glavni grad Bosne i Hercegovine okružen je planinama. Centar grada sarajeva leži na nadmorskoj</Fit>
            </Line>
            <Line h={17}>
              <Fit w={566}>{'visini od 511  metara iznad površine mora. Sarajevska naselja na padinama okolnih planina leže na'}</Fit>
            </Line>
            <Line h={17.5}><Fit w={258}>prosječnoj nadmorskoj visini od 900  metara.</Fit></Line>
            <Line h={17} />
            <Line h={17} bold><Fit w={156}>Sarajevske planine i rijeke</Fit></Line>
            <DocTable>
              {[0, 1, 2, 3, 4, 5, 6, 7].map(i => <DocCell key={i} />)}
            </DocTable>
          </Page>
        </Canvas>

        <ScrollBar>
          <svg width="16" height="38" viewBox="0 0 16 38">
            <path d="M4 2h9" stroke="#666" strokeWidth="2" />
            <path d="M.5 5.500h15v16H.5z" fill="#e6e8ea" stroke="#777" />
            <path d="M2.500 8.500h5v2h6v8l-2 1-2-2-2 1-3-4 2-2-4-1z" fill="#f7f7f7" stroke="#666" />
            <path d="M7.500 10.500l-1 3 4 1-1 3" fill="none" stroke="#666" />
            <path d="M4 33l4-5 4 5z" fill="#444" />
          </svg>
          <ScrollTrack><ScrollThumb /></ScrollTrack>
          <svg width="16" height="80" viewBox="0 0 16 80">
            <path d="M4 22h9l-4.500 5z" fill="#444" />
            <path d="M5 41l3.500-4 3.500 4zM5 45l3.500-4 3.500 4zM5 70h7l-3.500 4zM5 74h7l-3.500 4z" fill="#444" />
            <circle cx="8.500" cy="57" r="3" fill="none" stroke="#444" />
          </svg>
        </ScrollBar>
      </Workspace>

      <StatusBar>
        <Fit w={58}>Page: 1 of 1</Fit>
        <StatusSep l={9} r={9} />
        <Fit w={56}>Words: 261</Fit>
        <StatusSep l={9} r={9} />
        <Proofing>
          <svg width="16" height="16" viewBox="0 0 16 16">
            <path d="M1 7l5-2 2 1 5-1 2 5-6 4-6-1z" fill="#eef2fa" stroke="#7a8cb2" strokeWidth=".8" />
            <path d="M3 12l5 2 6-3v2l-6 3-5-2z" fill="#8ba2cc" />
            <path d="M5 6l3 4 7-8" fill="none" stroke="#3b66b8" strokeWidth="2" />
          </svg>
        </Proofing>
        <Fit w={74}>Bosnian (Latin)</Fit>
        <StatusSep l={9} r={0} />
        <Spring />
        <StatusSep l={0} r={4} />
        <ActiveView>
          <svg width="14" height="12" viewBox="0 0 14 12">
            <path d="M1.500.5h11v11h-11z" fill="#fff" stroke="#666" />
            <path d="M3 3.500h8M3 5.500h8M3 7.500h8M3 9.500h8" stroke="#777" />
          </svg>
        </ActiveView>
        <svg width="66" height="16" viewBox="1019 700 66 16" fill="none" stroke="#666">
          <path d="M1020.500 703.500h4l1 1 1-1h4v8h-4l-1 1-1-1h-4zM1025.500 704v8M1022 706.500h2M1022 708.500h2M1027 706.500h2M1027 708.500h2" fill="#f2f2f2" />
          <path d="M1036.500 703.500h10v8h-10zM1038 705.500h7M1038 707.500h4M1038 709.500h4" fill="#f7f7f7" />
          <circle cx="1045" cy="710" r="3" fill="#6c9a9a" stroke="#446a70" />
          <path d="M1057 703.500h7M1059 705.500h6M1061 707.500h4M1059 709.500h6M1057 711.500h8" />
          <path d="M1073 703.500h10M1073 706h10M1073 708.500h10M1073 711.500h10" strokeWidth="1.200" />
        </svg>
        <ZoomLevel><Fit w={27}>100%</Fit></ZoomLevel>
        <svg width="128" height="18" viewBox="1131 699 128 18">
          <path d="M1146 708.500h98" stroke="#8a8a8a" />
          <circle cx="1139" cy="708" r="6.500" fill="#f8f8f8" stroke="#666" />
          <circle cx="1251.500" cy="708" r="6.500" fill="#f8f8f8" stroke="#666" />
          <path d="M1136 708h6M1248 708h7M1251.500 704.500v7" stroke="#444" strokeWidth="1.800" />
          <path d="M1192 702.500h7.500v7l-3.750 3.500-3.750-3.500z" fill="#fafafa" stroke="#666" />
        </svg>
      </StatusBar>

      <IndentMark width="10" height="13" viewBox="0 0 10 13">
        <path d="M5 4l4 5v3H1V9z" fill="#e6e6e6" stroke="#777" />
      </IndentMark>

      <Menu>
        <MenuTitle><Fit w={47}>2x4 Table</Fit></MenuTitle>
        <SizeGrid>
          {cells.map(i => <SizeCell key={i} on={i % 10 < 2 && i < 40} />)}
        </SizeGrid>
        {menuItems.map(item => (
          <MenuItem key={item.w} disabled={item.disabled}>
            <MenuIcon>
              <svg width="17" height="17" viewBox="0 0 17 17">{item.icon}</svg>
            </MenuIcon>
            <Fit w={item.w}>{item.text}</Fit>
            {item.sub && <SubArrow />}
          </MenuItem>
        ))}
      </Menu>
      <Cursor width="13" height="21" viewBox="0 0 13 21">
        <path d="M1.500 1.500v15l3.500-3.500 2.500 6 2.500-1-2.500-5.500h4z" fill="#fff" stroke="#222" />
      </Cursor>

      <Logo>
        <LogoPart w={34} drop={17}>
          <LogoName x={4}><Fit w={24}>Online</Fit></LogoName>
          <LogoTile bg="#2e9fd4" shift={6} h={41}>O</LogoTile>
        </LogoPart>
        <LogoPart w={33} drop={9}>
          <LogoName x={5}><Fit w={24}>Centar</Fit></LogoName>
          <LogoTile bg="#155a8e" fold="#10426c" shift={4} h={43}>C</LogoTile>
        </LogoPart>
        <LogoPart w={46} drop={0}>
          <LogoName x={0}><Fit w={44}>za Edukaciju</Fit></LogoName>
          <LogoTile bg="#21316f" w={43}>E</LogoTile>
        </LogoPart>
      </Logo>
    </Window>
  </Screen>
)

export default App
